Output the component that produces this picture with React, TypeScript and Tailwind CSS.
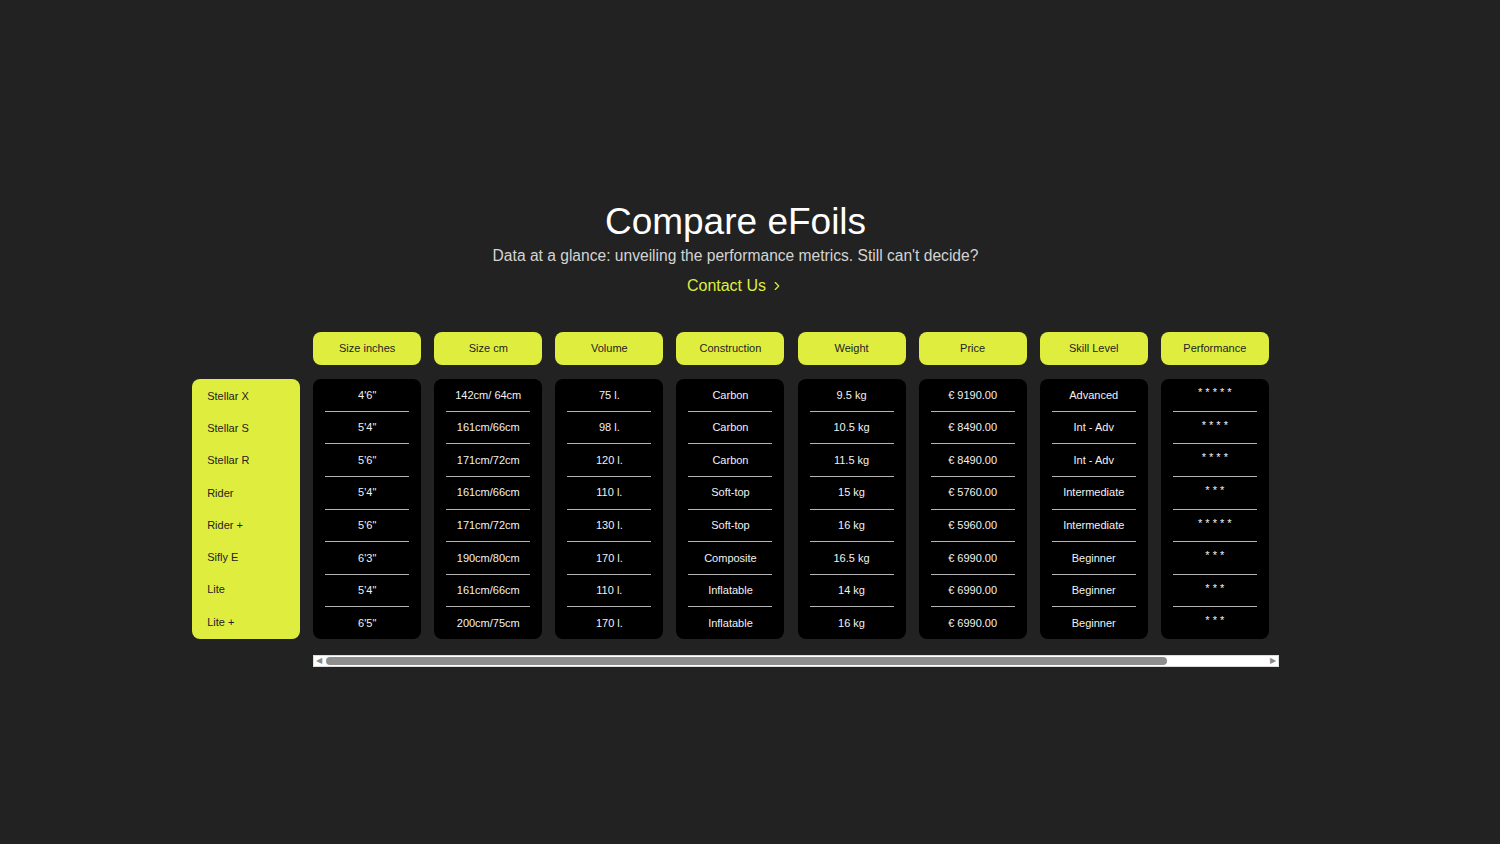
import { ChevronRight } from "lucide-react";

const models = ["Stellar X", "Stellar S", "Stellar R", "Rider", "Rider +", "Sifly E", "Lite", "Lite +"];

const columns: { title: string; values: string[] }[] = [
  { title: "Size inches", values: ["4'6\"", "5'4\"", "5'6\"", "5'4\"", "5'6\"", "6'3\"", "5'4\"", "6'5\""] },
  {
    title: "Size cm",
    values: ["142cm/ 64cm", "161cm/66cm", "171cm/72cm", "161cm/66cm", "171cm/72cm", "190cm/80cm", "161cm/66cm", "200cm/75cm"],
  },
  { title: "Volume", values: ["75 l.", "98 l.", "120 l.", "110 l.", "130 l.", "170 l.", "110 l.", "170 l."] },
  {
    title: "Construction",
    values: ["Carbon", "Carbon", "Carbon", "Soft-top", "Soft-top", "Composite", "Inflatable", "Inflatable"],
  },
  { title: "Weight", values: ["9.5 kg", "10.5 kg", "11.5 kg", "15 kg", "16 kg", "16.5 kg", "14 kg", "16 kg"] },
  {
    title: "Price",
    values: ["€ 9190.00", "€ 8490.00", "€ 8490.00", "€ 5760.00", "€ 5960.00", "€ 6990.00", "€ 6990.00", "€ 6990.00"],
  },
  {
    title: "Skill Level",
    values: ["Advanced", "Int - Adv", "Int - Adv", "Intermediate", "Intermediate", "Beginner", "Beginner", "Beginner"],
  },
  {
    title: "Performance",
    values: ["* * * * *", "* * * *", "* * * *", "* * *", "* * * * *", "* * *", "* * *", "* * *"],
  },
];

export default function App() {
  return (
    <div className="min-h-screen bg-[#222222] font-['Liberation_Sans',Arial,sans-serif] pt-[200px] pr-[29px]">
      <div className="flex flex-col items-center">
        <h1 className="text-[37px] leading-[44px] text-white">Compare eFoils</h1>
        <p className="mt-[1px] text-[15.6px] leading-[22px] text-[#d4d4d4]">
          Data at a glance: unveiling the performance metrics. Still can't decide?
        </p>
        <a href="#" className="mt-[8px] flex items-center gap-[4px] text-[16px] leading-[22px] text-[#dfee3e]">
          Contact Us
          <ChevronRight size={14} strokeWidth={2} />
        </a>

        <div className="mt-[35px] flex gap-[13px]">
          {/* model names */}
          <div className="flex flex-col">
            <div className="h-[47px]" />
            <div className="flex h-[260px] w-[108px] flex-col rounded-[8px] bg-[#dfee3e] py-[1px] pl-[15px]">
              {models.map((m) => (
                <div key={m} className="flex flex-1 items-center text-[11px] text-[#222222]">
                  {m}
                </div>
              ))}
            </div>
          </div>

          {/* scrollable data */}
          <div className="flex flex-col">
            <div className="flex gap-[13.1px] pr-[10px]">
              {columns.map((c) => (
                <div key={c.title} className="flex w-[108px] flex-col">
                  <div className="flex h-[33px] items-center justify-center rounded-[8px] bg-[#dfee3e] text-[11px] text-[#222222]">
                    {c.title}
                  </div>
                  <div className="mt-[14px] flex h-[260px] flex-col rounded-[8px] bg-black px-[12px]">
                    {c.values.map((v, i) => (
                      <div
                        key={i}
                        className={`flex flex-1 items-center justify-center text-[11px] text-[#f2f2f2] ${
                          i < c.values.length - 1 ? "border-b border-[#b5b5b5]" : ""
                        }`}
                      >
                        <span className={c.title === "Performance" ? "-mt-[5px]" : ""}>{v}</span>
                      </div>
                    ))}
                  </div>
                </div>
              ))}
            </div>
            {/* horizontal scrollbar */}
            <div className="mt-[16px] flex h-[12px] items-center border border-[#dcdcdc] bg-white px-[2px]">
              <span className="text-[8px] leading-none text-[#8a8a8a]">◀</span>
              <div className="ml-[4px] h-[8px] w-[841px] rounded-full bg-[#8e8e8e]" />
              <div className="flex-1" />
              <span className="text-[8px] leading-none text-[#8a8a8a]">▶</span>
            </div>
          </div>
        </div>
      </div>
    </div>
  );
}
